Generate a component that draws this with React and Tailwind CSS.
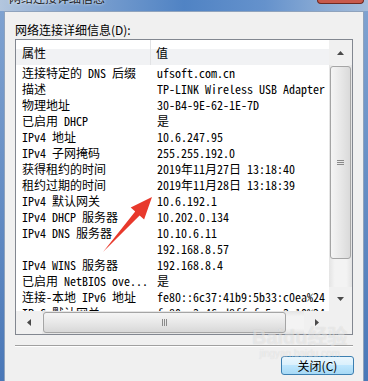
import React from 'react';

const ROWS = [
  ['连接特定的 DNS 后缀', 'ufsoft.com.cn'],
  ['描述', 'TP-LINK Wireless USB Adapter'],
  ['物理地址', '30-B4-9E-62-1E-7D'],
  ['已启用 DHCP', '是'],
  ['IPv4 地址', '10.6.247.95'],
  ['IPv4 子网掩码', '255.255.192.0'],
  ['获得租约的时间', '2019年11月27日 13:18:40'],
  ['租约过期的时间', '2019年11月28日 13:18:39'],
  ['IPv4 默认网关', '10.6.192.1'],
  ['IPv4 DHCP 服务器', '10.202.0.134'],
  ['IPv4 DNS 服务器', '10.10.6.11'],
  ['', '192.168.8.57'],
  ['IPv4 WINS 服务器', '192.168.8.4'],
  ['已启用 NetBIOS ove...', '是'],
  ['连接-本地 IPv6 地址', 'fe80::6c37:41b9:5b33:c0ea%24'],
  ['IPv6 默认网关', 'fe80::3e46:d8ff:fe5a:3c10%24'],
];

// little scrollbar triangles
function Tri({ dir }) {
  const pts = {
    up: '0,4 3.5,0 7,4',
    down: '0,0 7,0 3.5,4',
    left: '4,0 4,7 0,3.5',
    right: '0,0 0,7 4,3.5',
  }[dir];
  const horiz = dir === 'left' || dir === 'right';
  return (
    <svg width={horiz ? 4 : 7} height={horiz ? 7 : 4} viewBox={horiz ? '0 0 4 7' : '0 0 7 4'}>
      <polygon points={pts} fill="#4a4a4a" />
    </svg>
  );
}

export default function App() {
  return (
    <div className="relative w-[368px] h-[381px] overflow-hidden flex flex-col bg-[#4f7fbe] font-['Noto_Sans_CJK_SC',sans-serif]">
      {/* title bar */}
      <div className="h-[11px] shrink-0 flex items-start overflow-hidden bg-[linear-gradient(to_right,#b3c6de,#86a7d2_18%,#5083c4_50%,#6592cc_72%,#a6bedb)]">
        <span className="ml-[9px] mt-[-8px] text-[12px] leading-[12px] text-[#1a1a1a] [text-shadow:0_0_3px_#fff]">
          网络连接详细信息
        </span>
        <div className="ml-auto mr-[4px] w-[47px] h-[4px] rounded-b-[4px] border-x border-b border-[#6e2a22] bg-[#c85a4c]" />
      </div>

      <div className="flex-1 flex">
        <div className="w-[4px] bg-[linear-gradient(to_bottom,#7fa2d0,#4a78b8)]" />

        {/* client area */}
        <div className="flex-1 flex flex-col bg-[#f0f0f0] border border-b-0 border-[#8fa3bd] px-[10px]">
          <div className="mt-[10px] text-[12px] leading-[16px] text-black">网络连接详细信息(D):</div>

          {/* list view */}
          <div className="mt-[1px] h-[296px] flex flex-col border border-[#828790] bg-white">
            <div className="h-[271px] flex">
              <div className="flex-1 overflow-hidden">
                <div className="h-[25px] flex bg-[linear-gradient(to_bottom,#fff_0%,#fff_38%,#f1f2f4_38%,#f1f2f4_100%)] text-[12px] leading-[25px] text-black">
                  <div className="w-[135px] pl-[6px] border-r border-[#e2e3e5]">属性</div>
                  <div className="pl-[5px]">值</div>
                </div>
                <div className="font-['Noto_Sans_Mono_CJK_SC','Noto_Sans_CJK_SC',monospace] text-[12px] leading-[16px] text-black">
                  {ROWS.map(([k, v], i) => (
                    <div key={i} className="h-[16px] flex whitespace-nowrap">
                      <div className="w-[136px] shrink-0 pl-[6px] overflow-hidden">{k}</div>
                      <div className="pl-[5px]">{v}</div>
                    </div>
                  ))}
                </div>
              </div>

              {/* vertical scrollbar */}
              <div className="w-[23px] flex flex-col bg-[linear-gradient(to_right,#e4e4e4,#f3f3f3_25%,#f3f3f3_75%,#e4e4e4)]">
                <div className="h-[25px] flex items-center justify-center bg-[#f0f0f0]">
                  <Tri dir="up" />
                </div>
                <div className="flex-1">
                  <div className="mt-[1px] mx-[1px] h-[193px] rounded-[3px] border border-[#a5a5a5] bg-[linear-gradient(to_right,#f5f5f5,#e8e8e8_50%,#dadada)] flex flex-col items-center justify-center gap-[1px]">
                    <div className="w-[7px] h-[1px] bg-[#8a8a8a]" />
                    <div className="w-[7px] h-[1px] bg-[#8a8a8a]" />
                    <div className="w-[7px] h-[1px] bg-[#8a8a8a]" />
                  </div>
                </div>
                <div className="h-[24px] flex items-center justify-center bg-[#f0f0f0]">
                  <Tri dir="down" />
                </div>
              </div>
            </div>

            {/* horizontal scrollbar */}
            <div className="h-[23px] flex bg-[linear-gradient(to_bottom,#e4e4e4,#f3f3f3_25%,#f3f3f3_75%,#e4e4e4)]">
              <div className="w-[26px] flex items-center justify-center bg-[#f0f0f0]">
                <Tri dir="left" />
              </div>
              <div className="flex-1 py-[1px]">
                <div className="ml-[1px] w-[243px] h-full rounded-[3px] border border-[#a5a5a5] bg-[linear-gradient(to_bottom,#f5f5f5,#e8e8e8_50%,#d8d8d8)] flex items-center justify-center gap-[1px]">
                  <div className="w-[1px] h-[7px] bg-[#8a8a8a]" />
                  <div className="w-[1px] h-[7px] bg-[#8a8a8a]" />
                  <div className="w-[1px] h-[7px] bg-[#8a8a8a]" />
                </div>
              </div>
              <div className="w-[25px] flex items-center justify-center bg-[#f0f0f0]">
                <Tri dir="right" />
              </div>
              <div className="w-[23px] bg-[#f0f0f0]" />
            </div>
          </div>

          {/* etched separator */}
          <div className="mt-[10px] h-[1px] bg-[#a0a0a0]" />
          <div className="h-[1px] bg-white" />

          <button className="mt-[9px] self-end mr-[-1px] w-[73px] h-[19px] rounded-[3px] border border-[#3c7fb1] bg-[linear-gradient(to_bottom,#eaf6fd,#d9f0fc_50%,#bee6fd_50%,#a7d9f5)] text-[12px] leading-[17px] text-black">
            关闭(C)
          </button>
        </div>

        <div className="w-[4px] bg-[linear-gradient(to_bottom,#7fa2d0,#4a78b8)]" />
      </div>

      {/* red annotation arrow */}
      <svg className="absolute left-0 top-0 pointer-events-none" width="368" height="381">
        <polygon
          points="103,252 135.2,211.4 130.7,207.4 152,197 144.1,219.4 139.6,215.4"
          fill="#e8392c"
        />
      </svg>

      {/* faint watermark */}
      <div className="absolute left-[252px] top-[326px] pointer-events-none flex flex-col items-center text-white/45 [text-shadow:0_0_1px_rgba(0,0,0,0.12)]">
        <div className="text-[20px] leading-[22px] font-bold font-['Liberation_Sans','Noto_Sans_CJK_SC',sans-serif]">Baidu经验</div>
        <div className="text-[10px] leading-[12px] font-['Liberation_Sans',sans-serif]">jingyan.baidu.com</div>
      </div>
    </div>
  );
}
